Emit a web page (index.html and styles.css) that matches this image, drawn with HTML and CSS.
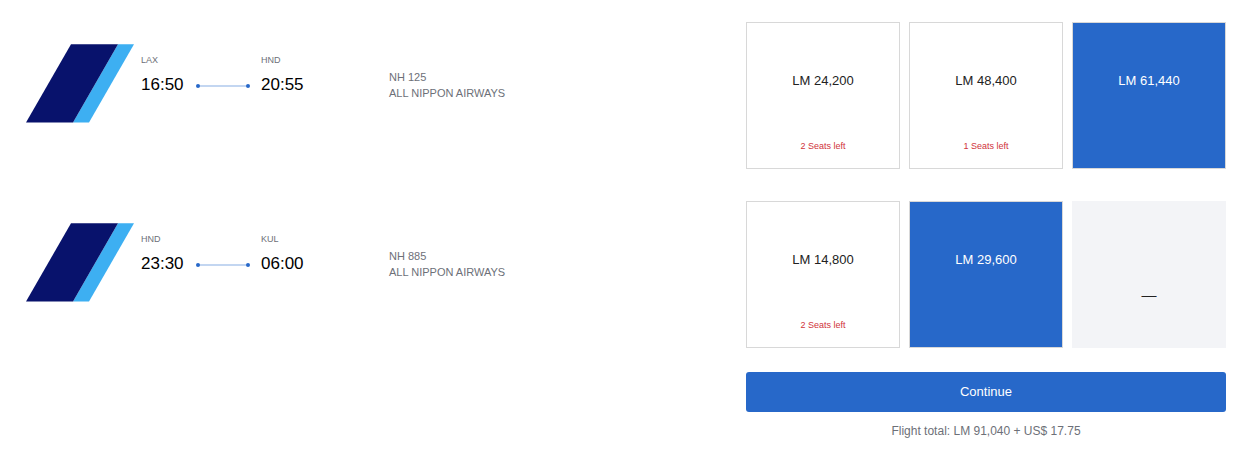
FILE: index.html
```
<!DOCTYPE html>
<html lang="en">
<head>
    <meta charset="UTF-8">
    <meta name="viewport" content="width=device-width, initial-scale=1.0">
    <title>Select flights</title>
    <link rel="stylesheet" href="styles.css">
</head>
<body>
    <main class="itinerary">
        <!-- Outbound leg -->
        <section class="segment">
            <div class="flight">
                <svg class="airline-logo" viewBox="0 0 108 79" role="img" aria-label="All Nippon Airways">
                    <path fill="#3daff2" d="M92 .3h16L63 78.400H47z"/>
                    <path fill="#08126c" d="M45 .3h47L47 78.400H0z"/>
                </svg>
                <div class="stop">
                    <div class="airport">LAX</div>
                    <div class="time">16:50</div>
                </div>
                <svg class="route" viewBox="0 0 54 4" aria-hidden="true">
                    <path stroke="#c3d6f1" stroke-width="2" d="M2 2h50"/>
                    <circle fill="#2768c9" cx="2" cy="2" r="2"/>
                    <circle fill="#2768c9" cx="52" cy="2" r="2"/>
                </svg>
                <div class="stop">
                    <div class="airport">HND</div>
                    <div class="time">20:55</div>
                </div>
                <div class="carrier">
                    <div>NH 125</div>
                    <div>ALL NIPPON AIRWAYS</div>
                </div>
            </div>
            <div class="fares">
                <button type="button" class="fare"><span class="price">LM 24,200</span><span class="seats">2 Seats left</span></button>
                <button type="button" class="fare"><span class="price">LM 48,400</span><span class="seats">1 Seats left</span></button>
                <button type="button" class="fare selected" aria-pressed="true"><span class="price">LM 61,440</span></button>
            </div>
        </section>

        <!-- Connecting leg -->
        <section class="segment">
            <div class="flight">
                <svg class="airline-logo" viewBox="0 0 108 79" role="img" aria-label="All Nippon Airways">
                    <path fill="#3daff2" d="M92 .3h16L63 78.400H47z"/>
                    <path fill="#08126c" d="M45 .3h47L47 78.400H0z"/>
                </svg>
                <div class="stop">
                    <div class="airport">HND</div>
                    <div class="time">23:30</div>
                </div>
                <svg class="route" viewBox="0 0 54 4" aria-hidden="true">
                    <path stroke="#c3d6f1" stroke-width="2" d="M2 2h50"/>
                    <circle fill="#2768c9" cx="2" cy="2" r="2"/>
                    <circle fill="#2768c9" cx="52" cy="2" r="2"/>
                </svg>
                <div class="stop">
                    <div class="airport">KUL</div>
                    <div class="time">06:00</div>
                </div>
                <div class="carrier">
                    <div>NH 885</div>
                    <div>ALL NIPPON AIRWAYS</div>
                </div>
            </div>
            <div class="fares">
                <button type="button" class="fare"><span class="price">LM 14,800</span><span class="seats">2 Seats left</span></button>
                <button type="button" class="fare selected" aria-pressed="true"><span class="price">LM 29,600</span></button>
                <button type="button" class="fare unavailable" disabled><span class="dash">—</span></button>
            </div>
        </section>

        <div class="checkout">
            <button type="button" class="continue">Continue</button>
            <p class="total">Flight total: LM 91,040 + US$ 17.75</p>
        </div>
    </main>
</body>
</html>
```
FILE: styles.css
```
* {
    box-sizing: border-box;
}
body {
    margin: 0;
    background: #fff;
    color: #000;
    font-family: "Liberation Sans", Arial, sans-serif;
}
button {
    font-family: inherit;
    cursor: pointer;
}
.itinerary {
    padding: 22px 21px 0 26px;
}
.segment {
    display: flex;
    justify-content: space-between;
    margin-bottom: 32px;
}
.flight {
    display: flex;
    align-items: flex-start;
    padding-top: 22px;
}
.airline-logo {
    width: 108px;
    height: 79px;
    margin-right: 7px;
}
.stop {
    width: 48px;
    padding-top: 8px;
}
.airport {
    color: #6d7078;
    font-size: 9px;
    line-height: 16px;
}
.time {
    margin-top: 5px;
    font-size: 17px;
    line-height: 24px;
}
/* thin line with a dot at each end */
.route {
    width: 54px;
    height: 4px;
    margin: 40px 11px 0 7px;
}
.carrier {
    margin-left: 80px;
    padding-top: 25px;
    color: #6d7078;
    font-size: 11px;
    line-height: 16px;
}
.fares {
    display: grid;
    grid-template-columns: repeat(3, 1fr);
    gap: 9px;
    width: 480px;
}
.fare {
    display: flex;
    flex-direction: column;
    align-items: center;
    justify-content: space-between;
    min-height: 147px;
    padding: 48px 8px 14px;
    background: #fff;
    border: 1px solid #d8d8d8;
    color: #222;
}
.price {
    font-size: 13px;
    line-height: 20px;
}
.seats {
    color: #d0333b;
    font-size: 9px;
    line-height: 16px;
}
.selected {
    background: #2768c9;
    color: #fff;
}
.unavailable {
    justify-content: center;
    padding-bottom: 8px;
    background: #f3f4f7;
    border-color: #f3f4f7;
    cursor: default;
}
.dash {
    font-size: 15px;
    line-height: 24px;
}
.checkout {
    width: 480px;
    margin: -8px 0 0 auto;
    text-align: center;
}
.continue {
    width: 100%;
    height: 40px;
    padding: 0 8px 2px;
    background: #2768c9;
    border: none;
    border-radius: 3px;
    color: #fff;
    font-size: 13px;
}
.total {
    margin: 9px 0 0;
    color: #6d7078;
    font-size: 12px;
    line-height: 20px;
}
```
